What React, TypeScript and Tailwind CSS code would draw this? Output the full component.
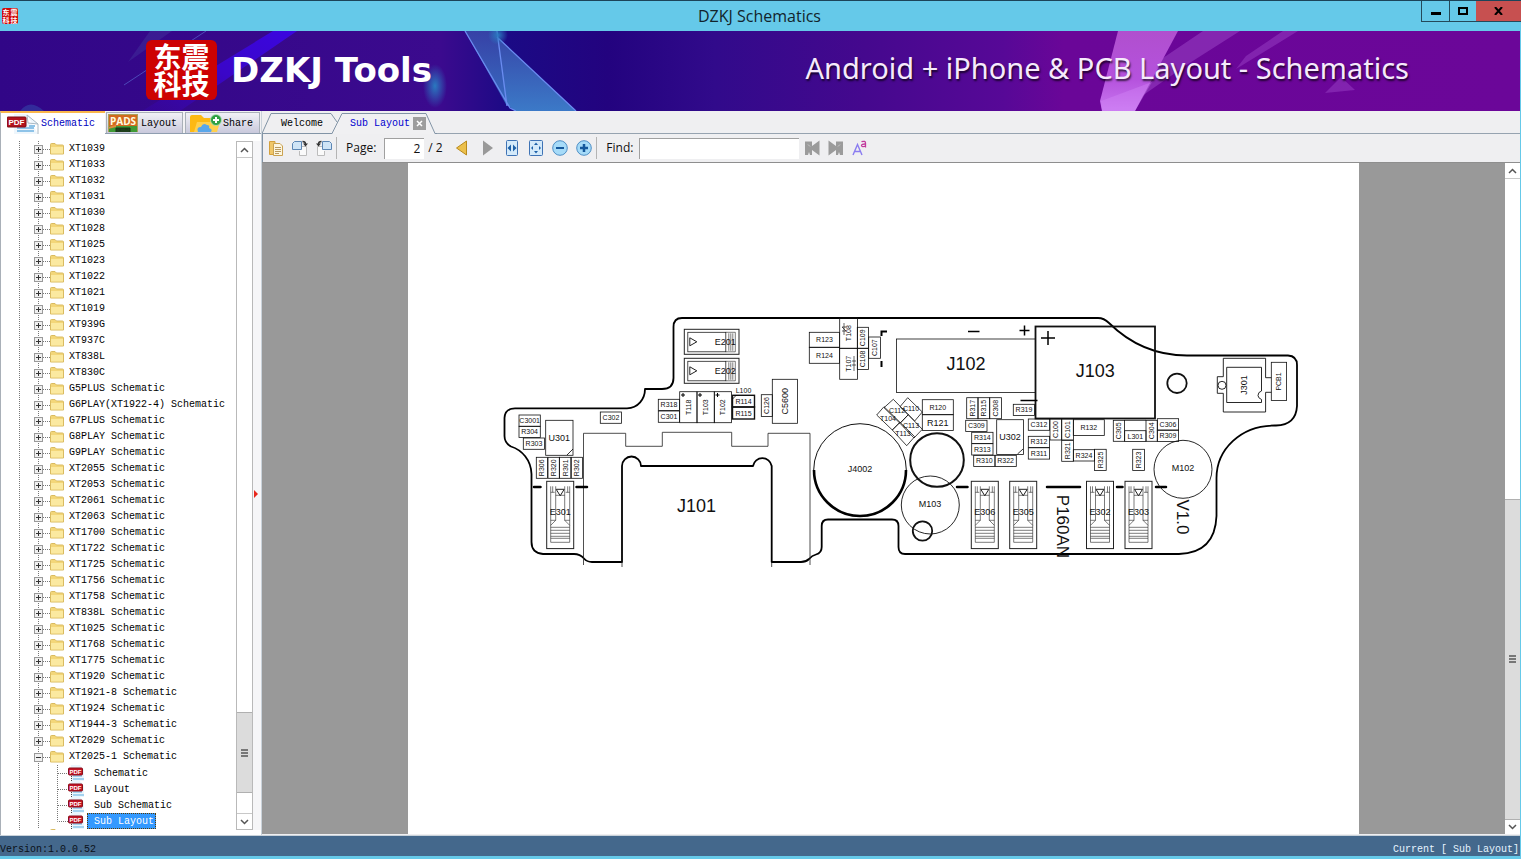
import { useState } from "react";
import type { ReactNode } from "react";

const mono = "font-['Liberation_Mono','Noto_Sans_CJK_SC',monospace] text-[10px]";
const ui = "font-['Open_Sans','Noto_Sans',sans-serif]";

const folders = [
  "XT1039",
  "XT1033",
  "XT1032",
  "XT1031",
  "XT1030",
  "XT1028",
  "XT1025",
  "XT1023",
  "XT1022",
  "XT1021",
  "XT1019",
  "XT939G",
  "XT937C",
  "XT838L",
  "XT830C",
  "G5PLUS Schematic",
  "G6PLAY(XT1922-4) Schematic",
  "G7PLUS Schematic",
  "G8PLAY Schematic",
  "G9PLAY Schematic",
  "XT2055 Schematic",
  "XT2053 Schematic",
  "XT2061 Schematic",
  "XT2063 Schematic",
  "XT1700 Schematic",
  "XT1722 Schematic",
  "XT1725 Schematic",
  "XT1756 Schematic",
  "XT1758 Schematic",
  "XT838L Schematic",
  "XT1025 Schematic",
  "XT1768 Schematic",
  "XT1775 Schematic",
  "XT1920 Schematic",
  "XT1921-8 Schematic",
  "XT1924 Schematic",
  "XT1944-3 Schematic",
  "XT2029 Schematic",
];

const files = ["Schematic", "Layout", "Sub Schematic", "Sub Layout"];

/* ---------- title bar and banner ---------- */

const TitleBar = () => (
  <header className="relative flex h-[31px] shrink-0 items-center border-t border-[#1c4459] bg-[#65c9e9]">
    <span
      className="ml-[2px] grid size-4 grid-cols-2 place-items-center overflow-hidden rounded-xs bg-[#cf0a0a] font-['Noto_Sans_CJK_SC',sans-serif] text-[7px] leading-[7px] font-bold text-white"
      aria-hidden="true"
    >
      <span>东</span>
      <span>震</span>
      <span>科</span>
      <span>技</span>
    </span>
    <h1 className={`${ui} flex-1 pl-20 text-center text-[16px] leading-6 text-[#12242c]`}>DZKJ Schematics</h1>
    <div className="flex h-[21px] self-start border-b border-l border-[#24495a]">
      <button aria-label="Minimize" className="flex w-7 items-center justify-center border-r border-[#24495a]">
        <svg width="10" height="10" viewBox="0 0 10 10">
          <rect y="6" width="10" height="3" />
        </svg>
      </button>
      <button aria-label="Maximize" className="flex w-[26px] items-center justify-center">
        <svg width="10" height="8" viewBox="0 0 10 8">
          <rect x="1" y="1" width="8" height="6" fill="none" stroke="#000" strokeWidth="2" />
        </svg>
      </button>
      <button aria-label="Close" className="flex w-[45px] items-center justify-center bg-[#c75050]">
        <svg width="9" height="8" viewBox="0 0 9 8">
          <path d="M1 0L8 8M8 0L1 8" stroke="#000" strokeWidth="2" />
        </svg>
      </button>
    </div>
  </header>
);

const BannerArt = () => (
  <svg
    className="absolute inset-0 size-full"
    viewBox="0 31 1520 80"
    preserveAspectRatio="xMidYMid slice"
    aria-hidden="true"
  >
    <defs>
      <linearGradient id="sky">
        <stop offset="0" stopColor="#310687" />
        <stop offset="0.29" stopColor="#3b0a8e" />
        <stop offset="0.335" stopColor="#1b0a85" />
        <stop offset="0.4" stopColor="#23037f" />
        <stop offset="0.47" stopColor="#310a8b" />
        <stop offset="0.57" stopColor="#45088e" />
        <stop offset="0.66" stopColor="#570897" />
        <stop offset="0.7" stopColor="#6a0698" />
        <stop offset="1" stopColor="#6b0699" />
      </linearGradient>
      <linearGradient id="beam" x1="1" y1="0" x2="0" y2="1">
        <stop offset="0" stopColor="#3b06e0" />
        <stop offset="0.5" stopColor="#3a06c8" />
        <stop offset="1" stopColor="#3706a0" stopOpacity="0.5" />
      </linearGradient>
      <linearGradient id="pink" x1="0" y1="0" x2="0" y2="1">
        <stop offset="0" stopColor="#b04fce" />
        <stop offset="0.6" stopColor="#b552dd" />
        <stop offset="1" stopColor="#c877f0" />
      </linearGradient>
      <linearGradient id="shard" x1="0" y1="0" x2="0" y2="1">
        <stop offset="0" stopColor="#3a4fae" />
        <stop offset="1" stopColor="#3f86cf" />
      </linearGradient>
      <radialGradient id="glow">
        <stop offset="0" stopColor="#2a79c0" />
        <stop offset="1" stopColor="#2a79c0" stopOpacity="0" />
      </radialGradient>
    </defs>
    <rect y="31" width="1520" height="80" fill="url(#sky)" />
    <path d="M273 31H297L180 111H142Z" fill="url(#beam)" />
    <path d="M150 31H172L128 62Z" fill="#3f2a97" opacity="0.6" />
    <path d="M206 31L124 85" stroke="#4d49b8" strokeWidth="1" />
    <path d="M20 111Q30 98 44 111Z" fill="#3561b8" opacity="0.4" />
    <ellipse cx="435" cy="86" rx="12" ry="22" fill="url(#glow)" />
    <path d="M465 31H497L507 106Z" fill="url(#shard)" opacity="0.8" />
    <path d="M497 37L576 111H515L506 104Z" fill="url(#shard)" opacity="0.9" />
    <path d="M465 31L510 108L516 111M497 31L507 106M497 37L576 111" fill="none" stroke="#6a8bf0" strokeWidth="1.3" />
    <circle cx="498" cy="35" r="10" fill="url(#glow)" />
    <path d="M1203 31H1240L1188 64L1142 96L1160 60Z" fill="#a44fcf" opacity="0.45" />
    <path d="M1283 31H1298L1236 69L1246 56Z" fill="#a44fcf" opacity="0.4" />
    <path d="M1341 77L1325 93L1355 90Z" fill="#a44fcf" opacity="0.4" />
    <path d="M1118 31H1178L1135 111H1102L1100 101Z" fill="url(#pink)" />
    <path d="M1101 101L1152 82L1135 111H1102Z" fill="#d68cf8" opacity="0.35" />
  </svg>
);

const Banner = () => (
  <div className="relative h-20 shrink-0 overflow-hidden">
    <BannerArt />
    <div className="relative flex h-full items-center pr-[111px] pb-[3px] pl-[146px]">
      <p className="flex h-[60px] w-[71px] flex-wrap content-center justify-center rounded-md bg-[#cd0202] text-center font-['Noto_Sans_CJK_SC',sans-serif] text-[28px] leading-[27px] font-bold text-white">
        东震
        <br />
        科技
      </p>
      <p className="ml-[14px] font-['DejaVu_Sans','Open_Sans',sans-serif] text-[34px] leading-10 font-bold text-white">
        DZKJ Tools
      </p>
      <p className="ml-auto pb-1 font-['Noto_Sans','Open_Sans',sans-serif] text-[29px] leading-9 whitespace-nowrap text-[#f6eafc] [text-shadow:1px_2px_2px_rgba(0,0,0,0.7)]">
        Android + iPhone &amp; PCB Layout - Schematics
      </p>
    </div>
  </div>
);

/* ---------- small icons ---------- */

const PdfIcon = ({ big = false }: { big?: boolean }) => (
  <svg width={big ? 32 : 17} height={big ? 20 : 16} viewBox={big ? "0 0 32 20" : "0 0 17 16"} aria-hidden="true">
    {big ? (
      <>
        <path d="M7 0H20L31 10V20H7Z" fill="#eef6fc" />
        <path d="M20 1L31 10V20M20 1L21 9L31 10" fill="#fff" stroke="#aab9c4" />
        <path d="M10 14H27M10 17H27M22 12H28" stroke="#8ec3e8" strokeWidth="2" />
        <rect x="0" y="3" width="19" height="10" rx="1" fill="#b3121d" stroke="#7d0d14" />
        <text x="9.500" y="11" textAnchor="middle" fontSize="8" fontWeight="bold" fill="#fff" fontFamily="Liberation Sans">
          PDF
        </text>
      </>
    ) : (
      <>
        <path d="M3 0H12L16 5V16H3Z" fill="#eaf5fc" />
        <path d="M5 11H14M5 14H16" stroke="#8cc6ea" strokeWidth="1.500" />
        <path d="M3.500 9V16" stroke="#444" strokeDasharray="1 1" />
        <rect x="0.500" y="3" width="14" height="7" rx="1" fill="#c41424" stroke="#8b0f1a" />
        <text x="7.500" y="9" textAnchor="middle" fontSize="6" fontWeight="bold" fill="#fff" fontFamily="Liberation Sans">
          PDF
        </text>
      </>
    )}
  </svg>
);

const PadsIcon = () => (
  <svg width="30" height="18" viewBox="0 0 30 18" aria-hidden="true">
    <rect width="30" height="18" fill="#d2691e" />
    <rect y="12" width="30" height="6" fill="#3f9a36" />
    <path d="M8 18V14H22V18M11 16H13M17 15H20" fill="#1e3f1c" stroke="#173415" />
    <path d="M0 13L8 11V13L0 15Z" fill="#e28a3c" />
    <rect x="0.500" y="0.500" width="29" height="18" fill="none" stroke="#a9a05a" />
    <text x="15" y="11" textAnchor="middle" fontSize="10" fontWeight="bold" fill="#fffbe0" fontFamily="Open Sans">
      PADS
    </text>
  </svg>
);

const CloudFolderIcon = () => (
  <svg width="32" height="18" viewBox="0 0 32 18" aria-hidden="true">
    <path d="M0 18V3Q0 1 2 1H11L14 4H25Q27 4 27 6V18Z" fill="#fdb913" />
    <path d="M4 18L7 8H30L27 18Z" fill="#ffd04d" />
    <path d="M8 18Q6 13 11 13Q13 8 17 11Q20 11 19 14Q23 15 21 18Z" fill="#5aa7ea" />
    <circle cx="26" cy="6" r="5.500" fill="#2ea043" stroke="#b9e5bf" strokeWidth="0.800" />
    <path d="M26 3V9M23 6H29" stroke="#fff" strokeWidth="2" />
  </svg>
);

const FolderIcon = () => (
  <svg width="14" height="12" viewBox="0 0 14 12" aria-hidden="true">
    <path d="M0.500 11V1.500Q0.500 0.500 1.500 0.500H5L6.500 2H12.500Q13.500 2 13.500 3V11Z" fill="#f3d679" stroke="#d9bb62" />
    <path d="M1 10.500V4H13V10.500Z" fill="#fbe9a0" />
  </svg>
);

const Chevron = ({ up = false }: { up?: boolean }) => (
  <svg width="9" height="6" viewBox="0 0 9 6" aria-hidden="true">
    <path d={up ? "M1 5L4.500 1.500L8 5" : "M1 1L4.500 4.500L8 1"} fill="none" stroke="#555" strokeWidth="1.500" />
  </svg>
);

const Grip = () => (
  <svg width="7" height="8" viewBox="0 0 7 8" aria-hidden="true">
    <path d="M0 1H7M0 4H7M0 7H7" stroke="#555" strokeWidth="1.500" />
  </svg>
);

/* ---------- sidebar ---------- */

const Expander = ({ open = false, label }: { open?: boolean; label: string }) => (
  <button aria-label={`${open ? "Collapse" : "Expand"} ${label}`} className="h-4 w-[30px] shrink-0">
    <svg width="30" height="16" viewBox="0 0 30 16">
      <path d="M18.500 0V16M23 8.500H30" stroke="#777" strokeDasharray="1 1" />
      <rect x="14.500" y="4.500" width="8" height="8" fill="#f0f0f0" stroke="#9a9a9a" />
      <path d={open ? "M16 8.500H21" : "M16 8.500H21M18.500 6V11"} stroke="#333" />
    </svg>
  </button>
);

const Tree = () => {
  const [selected, setSelected] = useState("Sub Layout");

  return (
    <div className="min-w-0 flex-1 overflow-hidden pl-[18px]">
      <ul className={`${mono} h-full border-l border-dotted border-[#777] leading-[18px] whitespace-pre text-black`}>
        {folders.map((name) => (
          <li key={name} className="flex h-4 items-center">
            <Expander label={name} />
            <FolderIcon />
            <span className="pl-[5px]">{name}</span>
          </li>
        ))}
        <li>
          <div className="flex h-4 items-center">
            <Expander open label="XT2025-1 Schematic" />
            <FolderIcon />
            <span className="pl-[5px]">XT2025-1 Schematic</span>
          </div>
          <ul>
            {files.map((file, i) => (
              <li key={file} className="flex h-4 items-center">
                <svg width="48" height="16" viewBox="0 0 48 16" className="shrink-0" aria-hidden="true">
                  <path
                    d={i === files.length - 1 ? "M18.500 0V16M37.500 0V8.500H48" : "M18.500 0V16M37.500 0V16M38 8.500H48"}
                    fill="none"
                    stroke="#777"
                    strokeDasharray="1 1"
                  />
                </svg>
                <PdfIcon />
                <button
                  onClick={() => setSelected(file)}
                  className={
                    file === selected
                      ? "ml-[2px] h-4 border border-dotted border-[#5b3a00] bg-[#3399ff] pr-px pl-[6px] leading-4 text-white"
                      : "ml-[2px] h-4 pl-[7px]"
                  }
                >
                  {file}
                </button>
              </li>
            ))}
          </ul>
        </li>
        <li className="flex h-4 items-start pl-[30px]">
          <FolderIcon />
        </li>
      </ul>
    </div>
  );
};

const sideTab = "flex h-full items-center border border-b-0 border-[#a9b0b8]";

const Sidebar = () => (
  <aside className="flex w-[262px] shrink-0 flex-col border-r border-[#c9d2da]">
    <div role="tablist" className={`${mono} flex h-[23px] shrink-0 items-end bg-[#f2f2f4]`}>
      <button
        role="tab"
        aria-selected="true"
        className="flex h-full w-[105px] items-center gap-[2px] border-t-2 border-l border-[#f9b64b] border-l-[#a9b0b8] bg-white pl-[6px] text-[#0000c0]"
      >
        <PdfIcon big />
        Schematic
      </button>
      <div className="flex h-[22px] flex-1 gap-[2px] border-b border-[#8f9eb0] pl-px">
        <button role="tab" aria-selected="false" className={`${sideTab} w-[77px] gap-[3px] bg-linear-to-b from-[#f1f1f6] to-[#c9c9dc] pl-px`}>
          <PadsIcon />
          Layout
        </button>
        <button role="tab" aria-selected="false" className={`${sideTab} w-[75px] gap-px bg-linear-to-b from-[#f1f1f6] to-[#c9c9dc] pl-[4px]`}>
          <CloudFolderIcon />
          Share
        </button>
      </div>
    </div>
    <div className="flex min-h-0 flex-1 border-l border-[#a9b0b8] bg-white pt-[7px] pb-[5px]">
      <Tree />
      <div className="flex w-[17px] shrink-0 flex-col border border-[#b9b9b9] bg-white">
        <button aria-label="Scroll tree up" className="flex h-4 items-center justify-center border-b border-[#c8c8c8]">
          <Chevron up />
        </button>
        <div className="flex-1" />
        <div className="flex h-[81px] items-center justify-center border-y border-[#b0b0b0] bg-[#dcdcdc]">
          <Grip />
        </div>
        <div className="h-5" />
        <button aria-label="Scroll tree down" className="flex h-4 items-center justify-center border-t border-[#c8c8c8]">
          <Chevron />
        </button>
      </div>
      <div className="flex w-2 shrink-0 items-center bg-[#f6f6f8]">
        <svg width="6" height="8" viewBox="0 0 6 8" className="mt-4" aria-hidden="true">
          <path d="M1 0L5 4L1 8Z" fill="#e8261c" />
        </svg>
      </div>
    </div>
  </aside>
);

/* ---------- document tabs and toolbar ---------- */

const DocumentTabs = () => (
  <div role="tablist" className={`${mono} relative flex h-[23px] shrink-0 items-end border-b border-[#96a3b0] bg-[#efeff1]`}>
    <svg className="absolute top-0 left-0" width="175" height="23" viewBox="0 0 175 23" aria-hidden="true">
      <path d="M70 23L80 2H164L173 23Z" fill="#f0f0f2" />
      <path d="M0 22.500L9 2.500H69L75 11" fill="none" stroke="#8294a6" />
      <path d="M0 22.500H70L80 2.500H164L173 22.500H175" fill="none" stroke="#8294a6" />
    </svg>
    <button role="tab" aria-selected="false" className="relative h-5 w-[73px] pl-[19px] text-left text-black">
      Welcome
    </button>
    <div className="relative flex h-5 items-center gap-[3px] pl-[15px]">
      <button role="tab" aria-selected="true" className="text-[#0000d0]">
        Sub Layout
      </button>
      <button aria-label="Close tab" className="flex size-[13px] items-center justify-center bg-[#9d9d9d]">
        <svg width="7" height="7" viewBox="0 0 7 7">
          <path d="M1 1L6 6M6 1L1 6" stroke="#fff" strokeWidth="1.500" />
        </svg>
      </button>
    </div>
  </div>
);

const ToolButton = ({ label, children }: { label: string; children: ReactNode }) => (
  <button aria-label={label} className="flex h-5 w-6 items-center justify-center">
    <svg width="16" height="16" viewBox="0 0 16 16">
      {children}
    </svg>
  </button>
);

const Divider = () => <span className="h-[22px] w-px bg-[#b4b4b4]" />;

const Toolbar = () => (
  <div className={`${ui} flex h-7 shrink-0 items-center border-l border-[#8294a6] bg-[#efeff1] pl-px text-[12px] text-[#111]`}>
    <ToolButton label="Open">
      <path d="M1.500 1.500H7V14.500H1.500Z" fill="#f0c768" stroke="#d3a03c" />
      <path d="M5.500 3.500H12L14.500 6V15.500H5.500Z" fill="#fdf6df" stroke="#caa251" />
      <path d="M7 7.500H13M7 9.500H13M7 11.500H13M7 13.500H11" stroke="#b89a61" />
    </ToolButton>
    <ToolButton label="Rotate right">
      <path d="M8.500 6.500H14.500V15.500H7.500V11" fill="#fafafa" stroke="#bcbcbc" />
      <path d="M2.500 1.500H9.500V9.500H0.500V3.500Z" fill="#cfe4f6" stroke="#5c86b4" />
      <path d="M10.500 1.500Q13.500 1.500 13.500 4" fill="none" stroke="#333" strokeWidth="1.400" />
      <path d="M11 3.500H16L13.500 6.500Z" fill="#333" />
    </ToolButton>
    <ToolButton label="Rotate left">
      <path d="M7.500 6.500H1.500V15.500H8.500V11" fill="#fafafa" stroke="#bcbcbc" />
      <path d="M6.500 1.500H13.500L15.500 3.500V9.500H6.500Z" fill="#cfe4f6" stroke="#5c86b4" />
      <path d="M5.500 1.500Q2.500 1.500 2.500 4" fill="none" stroke="#333" strokeWidth="1.400" />
      <path d="M0 3.500H5L2.500 6.500Z" fill="#333" />
    </ToolButton>
    <Divider />
    <label htmlFor="page" className="mr-2 ml-[9px]">
      Page:
    </label>
    <input
      id="page"
      defaultValue="2"
      className="h-[21px] w-10 border-t border-l border-[#a0a0a0] bg-white pr-1 text-right outline-none"
    />
    <span className="ml-1 w-[22px] whitespace-nowrap">/ 2</span>
    <ToolButton label="Previous page">
      <path d="M12.500 1V15L2.500 8Z" fill="#ecc04c" stroke="#b98a1c" />
    </ToolButton>
    <span className="w-[2px]" />
    <ToolButton label="Next page">
      <path d="M3 0.500L13 8L3 15.500Z" fill="#999" />
    </ToolButton>
    <ToolButton label="Fit width">
      <rect x="2.500" y="0.500" width="11" height="15" rx="1" fill="#d4eafa" stroke="#3f73b5" />
      <path d="M7 4.500V11.500L3.500 8ZM9 4.500V11.500L12.500 8Z" fill="#1e61a8" />
    </ToolButton>
    <ToolButton label="Fit page">
      <rect x="1.500" y="0.500" width="13" height="15" rx="1" fill="#d4eafa" stroke="#3f73b5" />
      <path d="M6 5L8 2.500L10 5ZM6 11L8 13.500L10 11ZM5 6L3 8L5 10ZM11 6L13 8L11 10Z" fill="#1e61a8" />
    </ToolButton>
    <ToolButton label="Zoom out">
      <circle cx="8" cy="8" r="7.300" fill="#a6dbf8" stroke="#4f8fc6" />
      <path d="M4 8H12" stroke="#14589c" strokeWidth="2" />
    </ToolButton>
    <ToolButton label="Zoom in">
      <circle cx="8" cy="8" r="7.300" fill="#a6dbf8" stroke="#4f8fc6" />
      <path d="M4 8H12M8 4V12" stroke="#14589c" strokeWidth="2.500" />
    </ToolButton>
    <Divider />
    <label htmlFor="find" className="mr-[6px] ml-[9px]">
      Find:
    </label>
    <input id="find" className="h-[21px] w-40 border-t border-l border-[#a0a0a0] bg-white px-1 outline-none" />
    <span className="w-px" />
    <ToolButton label="Find previous">
      <path d="M1 1.500H8V6L15.500 0.500V15.500L8 10V15H6L5 12L4 15H1Z" fill="#9b9b9b" />
      <path d="M4 4.500L6 6.500" stroke="#c8c8c8" />
    </ToolButton>
    <ToolButton label="Find next">
      <path d="M15 1.500H8V6L0.500 0.500V15.500L8 10V15H10L11 12L12 15H15Z" fill="#9b9b9b" />
      <path d="M12 4.500L10 6.500" stroke="#c8c8c8" />
    </ToolButton>
    <ToolButton label="Match case">
      <path d="M1 15L5.500 4.500L10 15M3 11.500H8.500" fill="none" stroke="#8a7cf0" strokeWidth="1.400" />
      <path
        d="M9.500 1.700Q13.500 0.500 13.500 3V7.500M13.500 4Q9.500 3.800 9.500 5.600Q10 7.600 13.500 6"
        fill="none"
        stroke="#c23a9c"
        strokeWidth="1.300"
      />
    </ToolButton>
  </div>
);

/* ---------- board drawing ---------- */

type PartProps = {
  x: number;
  y: number;
  w?: number;
  h?: number;
  name: string;
  up?: boolean;
  size?: number;
  thick?: number;
  dy?: number;
};

const Label = ({ x, y, name, turn = 0, size = 7 }: { x: number; y: number; name: string; turn?: number; size?: number }) => (
  <text
    x={x}
    y={y + size * 0.36}
    fontSize={size}
    textAnchor="middle"
    fill="#111"
    transform={turn ? `rotate(${turn} ${x} ${y})` : undefined}
  >
    {name}
  </text>
);

const Part = ({ x, y, w = 21.3, h = 11.3, name, up = false, size = 7, thick = 0.8, dy = 0 }: PartProps) => (
  <g>
    <rect x={x} y={y} width={w} height={h} fill="none" stroke="#111" strokeWidth={thick} />
    <Label x={x + w / 2} y={y + h / 2 + dy} name={name} turn={up ? -90 : 0} size={size} />
  </g>
);

const parts: PartProps[] = [
  { x: 519, y: 415, name: "C3001" },
  { x: 519, y: 426.3, name: "R304" },
  { x: 523.3, y: 438, name: "R303" },
  { x: 545.7, y: 420.3, w: 27.3, h: 35, name: "U301", size: 9 },
  { x: 536.3, y: 457.3, w: 11.3, h: 21, name: "R306", up: true },
  { x: 548, y: 457.3, w: 11.3, h: 21, name: "R320", up: true },
  { x: 559.5, y: 457.3, w: 11.3, h: 21, name: "R301", up: true },
  { x: 571.3, y: 457.3, w: 11.3, h: 21, name: "R302", up: true },
  { x: 600.3, y: 412, name: "C302" },
  { x: 658.3, y: 399.3, name: "R318" },
  { x: 658.3, y: 411, name: "C301" },
  { x: 679.7, y: 391.7, w: 17.3, h: 31, name: "T118", up: true },
  { x: 697, y: 391.7, w: 17.3, h: 31, name: "T103", up: true },
  { x: 714.3, y: 391.7, w: 17.3, h: 31, name: "T102", up: true },
  { x: 732.5, y: 395.3, w: 22, h: 11.7, name: "R114", thick: 1.4 },
  { x: 732.5, y: 407, w: 22, h: 12, name: "R115", thick: 1.4 },
  { x: 761.3, y: 394.7, w: 11, h: 21.7, name: "C126", up: true },
  { x: 772.3, y: 379.3, w: 25.3, h: 44, name: "C5600", up: true, size: 9 },
  { x: 809.3, y: 332.3, w: 30.3, h: 15, name: "R123" },
  { x: 809.3, y: 347.3, w: 30.3, h: 16, name: "R124" },
  { x: 839.7, y: 318, w: 17.7, h: 30.3, name: "T108", up: true },
  { x: 839.7, y: 348.3, w: 17.7, h: 31, name: "T107", up: true },
  { x: 857.3, y: 327.3, w: 11.3, h: 21, name: "C109", up: true },
  { x: 857.3, y: 348.3, w: 11.3, h: 21.3, name: "C108", up: true },
  { x: 868.7, y: 337, w: 11.7, h: 21.3, name: "C107", up: true },
  { x: 896.5, y: 339, w: 139, h: 53.5, name: "J102", size: 18, dy: -2 },
  { x: 1035.5, y: 326.5, w: 119.5, h: 92, name: "J103", size: 18, thick: 1.8, dy: -2 },
  { x: 922.3, y: 399.7, w: 31, h: 15, name: "R120" },
  { x: 922.3, y: 414.7, w: 31, h: 15.7, name: "R121", size: 9 },
  { x: 966.7, y: 397.7, w: 11.3, h: 21, name: "R317", up: true },
  { x: 978, y: 397.7, w: 11.7, h: 21, name: "R315", up: true },
  { x: 989.7, y: 397.7, w: 11.7, h: 21, name: "C308", up: true },
  { x: 1013.3, y: 404.3, name: "R319" },
  { x: 965.7, y: 420.3, name: "C309" },
  { x: 971.7, y: 432.3, name: "R314" },
  { x: 971.7, y: 443.7, name: "R313" },
  { x: 973.7, y: 455.3, name: "R310" },
  { x: 995, y: 455.3, name: "R322" },
  { x: 996.7, y: 419.7, w: 26.7, h: 34.7, name: "U302", size: 9 },
  { x: 1028.3, y: 419, name: "C312" },
  { x: 1028.3, y: 436.3, name: "R312" },
  { x: 1028.3, y: 447.8, name: "R311" },
  { x: 1050, y: 419, w: 11.7, h: 21, name: "C100", up: true },
  { x: 1061.7, y: 419, w: 11.7, h: 21, name: "C101", up: true },
  { x: 1061.7, y: 440.3, w: 11.7, h: 21, name: "R321", up: true },
  { x: 1073.3, y: 419.7, w: 31, h: 15.7, name: "R132" },
  { x: 1073.3, y: 449.7, name: "R324" },
  { x: 1094.5, y: 449.3, w: 11.7, h: 21.3, name: "R325", up: true },
  { x: 1113.3, y: 420.3, w: 11.3, h: 21, name: "C305", up: true },
  { x: 1124.7, y: 430.7, h: 10.7, name: "L301" },
  { x: 1146, y: 420.3, w: 11.3, h: 21, name: "C304", up: true },
  { x: 1157.3, y: 418.7, name: "C306" },
  { x: 1157.3, y: 430.3, name: "R309" },
  { x: 1132.7, y: 449.3, w: 11.7, h: 21.3, name: "R323", up: true },
  { x: 1271.3, y: 362.3, w: 15.3, h: 38.3, name: "PCB1", up: true },
];

const diamonds = [
  { d: "M876.7 415L884 406.700L900 422.300L892.300 430Z", name: "T104", x: 888, y: 418 },
  { d: "M884 407.700L893.300 399.300L908.300 414.700L900 423.300Z", name: "C112", x: 897, y: 410 },
  { d: "M900 406.700L907.700 397.700L922.300 412L914.700 421Z", name: "C110", x: 911, y: 408 },
  { d: "M900 423.300L908.300 414.700L922.300 429.300L914 438Z", name: "C113", x: 911, y: 425 },
  { d: "M892.300 430L900 422.300L914.700 436.700L906.700 445.700Z", name: "T113", x: 903, y: 433 },
];

const springs = [
  { x: 546.7, name: "E301" },
  { x: 971.3, name: "E306" },
  { x: 1009.7, name: "E305" },
  { x: 1086.5, name: "E302" },
  { x: 1125, name: "E303" },
];

const Spring = ({ x, name }: { x: number; name: string }) => (
  <g transform={`translate(${x} 481.300)`} fill="none" stroke="#222">
    <rect width="27" height="67.300" strokeWidth="1" />
    <g strokeWidth="0.600">
      <path d="M4 5V61H23V5M4 11H8M19 11H23M6 5V11M21 5V11M9 5V39L4 44M18 5V39L23 44M9 14H18M4 39H9M18 39H23" />
      <path d="M4 46H23M4 49H23M4 52H23M4 55H23M4 57H23" />
    </g>
    <path d="M9.500 8H17.500L13.500 14.500Z" strokeWidth="1" />
    <g stroke="none">
      <Label x={13.5} y={30.5} name={name} size={9} />
    </g>
  </g>
);

const Latch = ({ y, name }: { y: number; name: string }) => (
  <g transform={`translate(684.300 ${y})`} fill="none" stroke="#222">
    <rect width="54.700" height="25" strokeWidth="1" />
    <rect x="3.500" y="3" width="38" height="19.500" strokeWidth="0.800" />
    <path d="M41.500 3H51V22.500H41.500M44.500 4V21.500M46.500 4V21.500M48.500 4V21.500" strokeWidth="0.600" />
    <path d="M5.500 8.500V16.500L12.500 12.500Z" strokeWidth="1" />
    <g stroke="none">
      <Label x={41} y={12} name={name} size={9} />
    </g>
  </g>
);

const outline =
  "M682 318H1098Q1104 318 1109 323Q1142 355.500 1187 355.500H1288Q1297 356 1297 365V406Q1296 425 1276 425.500" +
  "C1240 425 1216.500 450 1216.500 478V516Q1215 553 1179 554H905Q898.500 554 898.500 547V526Q898.500 519.500 892 519.500" +
  "H828Q821.700 519.500 821.700 526V547Q821.700 553 816 554.500Q812 555.500 809 559Q806 562 801 562H771.700V466" +
  "A9.500 9.500 0 0 0 753 466H641A9.500 9.500 0 0 0 622 466V562H592Q587 562 584 558.500Q580 554 574 554H543" +
  "Q531.500 553 531.500 542V474C531 460 522 450 511 446.500Q504.500 443 504.500 436V418Q505 408.300 515 408.300" +
  "H627C638 408 645 399 645 389H662Q673.500 389 673.500 378V327Q673.500 318 682 318Z";

const Board = () => (
  <svg
    className="size-full"
    viewBox="408 163 951 671"
    preserveAspectRatio="xMidYMid meet"
    fontFamily="Liberation Sans, Arial, sans-serif"
    role="img"
    aria-label="Board layout"
  >
    <path d={outline} fill="none" stroke="#000" strokeWidth="1.800" strokeLinejoin="round" />
    <path
      d="M583.500 565V433.300H625.700V446.300H662.300V432.300H731.700V446.300H768V433.300H810V565M622 562V567M771.700 562V567"
      fill="none"
      stroke="#222"
      strokeWidth="0.800"
    />
    {parts.map((p) => (
      <Part key={p.name} {...p} />
    ))}
    {diamonds.map((p) => (
      <g key={p.name}>
        <path d={p.d} fill="none" stroke="#111" strokeWidth="0.800" />
        <Label x={p.x} y={p.y} name={p.name} />
      </g>
    ))}
    {springs.map((s) => (
      <Spring key={s.name} {...s} />
    ))}
    <Latch y={329.3} name="E201" />
    <Latch y={358.3} name="E202" />

    {/* polarity and alignment marks */}
    <g fill="none" stroke="#000">
      <path
        d="M534 487H540.500M576.500 487H587M957 487H967.500M1047 487H1080M1117 487H1122.500M1156 487H1166"
        strokeWidth="2.500"
        strokeLinecap="round"
      />
      <path d="M968 331.500H979.500M1019.500 330.500H1029.500M1024.500 325.500V335.500M1020.500 400.500H1037.500M1041 338H1055M1048 331V345" strokeWidth="1.500" />
      <path d="M881.500 336V331.500H887M881.500 361V367" strokeWidth="2" />
      <path d="M681 395H685M683 393V397M698 395H702M700 393V397M715.500 395H719.500M717.500 393V397" strokeWidth="1" />
      <path d="M567 455L573 449M1017.500 454L1023 449M732.500 399L736 395.500M1124.700 420.300H1146" strokeWidth="0.800" />
      <path d="M842 327H846M842 331H846M844 323V335M842 327L846 331M852 361H856M852 365H856M854 356V371" strokeWidth="0.600" />
    </g>

    <g fill="none" stroke="#111">
      <circle cx="860" cy="470" r="46.300" strokeWidth="1" />
      <path d="M814 470A46 46 0 0 0 906 470" stroke="#000" strokeWidth="2.600" />
      <circle cx="937" cy="460" r="26.800" strokeWidth="2" />
      <circle cx="930.300" cy="505" r="29" strokeWidth="0.900" />
      <circle cx="922.500" cy="531" r="9.700" strokeWidth="1.800" />
      <circle cx="1183" cy="469.300" r="29" strokeWidth="0.900" />
      <circle cx="1177" cy="383.300" r="9.700" strokeWidth="1.800" />
    </g>

    {/* J301 connector */}
    <g fill="none" stroke="#111" strokeWidth="0.900">
      <path d="M1223.300 376.700V358.300H1265.600V377.700H1271.300M1271.300 392.300H1265.600V412H1223.300V393.300H1217.300V376.700H1223.300" />
      <path d="M1261.500 391V367.300H1226.700V402.500H1261.500V399.500Q1258 398 1258 395.500Q1258 392 1261.500 391Z" />
      <circle cx="1222" cy="385.300" r="4" />
    </g>

    <Label x={1243.500} y={385} name="J301" turn={-90} size={9} />
    <Label x={743.500} y={390} name="L100" />
    <Label x={696.500} y={506} name="J101" size={18} />
    <Label x={860} y={468.500} name="J4002" size={9} />
    <Label x={930} y={504} name="M103" size={9} />
    <Label x={1183} y={468} name="M102" size={9} />
    <Label x={1063} y={526.500} name="P160AN" turn={90} size={17} />
    <Label x={1183.500} y={517} name="V1.0" turn={90} size={17} />
  </svg>
);

const Viewer = () => (
  <div className="flex min-h-0 flex-1 border-t border-[#8e8e8e] bg-[#999]">
    <div className="flex min-w-0 flex-1 px-[146px]">
      <div className="min-w-0 flex-1 bg-white">
        <Board />
      </div>
    </div>
    <div className="flex w-[15px] shrink-0 flex-col bg-white">
      <button aria-label="Scroll page up" className="flex h-4 items-center justify-center border-b border-[#c8c8c8]">
        <Chevron up />
      </button>
      <div className="flex-1" />
      <div className="flex flex-1 items-center justify-center border-y border-[#b0b0b0] bg-[#dcdcdc]">
        <Grip />
      </div>
      <button aria-label="Scroll page down" className="flex h-[14px] items-center justify-center">
        <Chevron />
      </button>
    </div>
  </div>
);

const App = () => {
  return (
    <div className="flex h-screen flex-col overflow-hidden bg-[#65c9e9]">
      <TitleBar />
      <div className="flex min-h-0 flex-1 flex-col pr-px pb-[3px]">
        <Banner />
        <main className="flex min-h-0 flex-1 border-b border-[#c9d2da] bg-[#efeff1]">
          <Sidebar />
          <section className="flex min-w-0 flex-1 flex-col pb-px">
            <DocumentTabs />
            <Toolbar />
            <Viewer />
          </section>
        </main>
        <footer className={`${mono} flex h-5 shrink-0 items-end justify-between bg-[#44688c] leading-3 whitespace-pre`}>
          <span className="text-[#0b1118]">Version:1.0.0.52</span>
          <span className="pr-px text-[#e6f4ff]">Current [ Sub Layout]</span>
        </footer>
      </div>
    </div>
  );
};

export default App;
